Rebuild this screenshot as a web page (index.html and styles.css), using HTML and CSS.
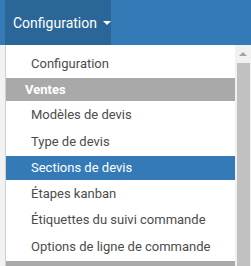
FILE: index.html
```html
<!DOCTYPE html>
<html lang="fr">
<head>
    <meta charset="UTF-8">
    <meta name="viewport" content="width=device-width, initial-scale=1.0">
    <title>Configuration</title>
    <link rel="stylesheet" href="styles.css">
</head>
<body>
    <header class="navbar">
        <div class="nav-item active">
            Configuration <span class="caret"></span>
        </div>
    </header>

    <div class="page">
        <div class="gutter"></div>
        <div class="dropdown">
            <ul class="menu">
                <li class="menu-item">Configuration</li>
                <li class="menu-header">Ventes</li>
                <li class="menu-item">Modèles de devis</li>
                <li class="menu-item">Type de devis</li>
                <li class="menu-item selected">Sections de devis</li>
                <li class="menu-item">Étapes kanban</li>
                <li class="menu-item">Étiquettes du suivi commande</li>
                <li class="menu-item">Options de ligne de commande</li>
                <li class="menu-header"></li>
            </ul>
            <div class="scrollbar">
                <div class="scroll-arrow"></div>
                <div class="scroll-thumb"></div>
            </div>
        </div>
    </div>
</body>
</html>
```

FILE: styles.css
```css
body {
    margin: 0;
    padding: 0;
    height: 266px;
    overflow: hidden;
    font-family: Roboto, "Liberation Sans", sans-serif;
    background-color: #f2f2f2;
}

.navbar {
    height: 45px;
    background-color: #337ab7;
    padding-left: 5px;
    display: flex;
}

.nav-item {
    display: flex;
    align-items: center;
    padding: 0 7px 0 8px;
    width: 91px;
    color: white;
    font-size: 14px;
}

.nav-item.active {
    background-color: #2b6698;
}

.caret {
    display: inline-block;
    margin-left: 6px;
    margin-top: 1px;
    border-top: 4px solid white;
    border-left: 4px solid transparent;
    border-right: 4px solid transparent;
}

.page {
    display: flex;
    height: 221px;
    overflow: hidden;
}

.gutter {
    width: 5px;
    background-color: #f2f2f2;
    border-right: 1px solid #cfcfcf;
}

.dropdown {
    flex: 1;
    display: flex;
    background-color: white;
}

.menu {
    flex: 1;
    display: flex;
    flex-direction: column;
    gap: 2.3px;
    list-style: none;
    margin: 0;
    padding: 6.7px 0 0 0;
    font-size: 13px;
}

.menu-item {
    flex-shrink: 0;
    height: 24px;
    line-height: 24px;
    padding-left: 25px;
    color: #4c4c4c;
    white-space: nowrap;
}

.menu-item.selected {
    background-color: #337ab7;
    color: white;
}

.menu-header {
    flex-shrink: 0;
    height: 23px;
    line-height: 23px;
    padding-left: 19px;
    background-color: #a9a9a9;
    color: white;
    font-weight: bold;
}

.scrollbar {
    width: 16px;
    background-color: #f1f1f1;
    display: flex;
    flex-direction: column;
}

.scroll-arrow {
    height: 18px;
    display: flex;
    justify-content: center;
    align-items: center;
}

.scroll-arrow::before {
    content: "";
    border-bottom: 4px solid #a3a3a3;
    border-left: 4px solid transparent;
    border-right: 4px solid transparent;
}

.scroll-thumb {
    flex: 1;
    margin: 0 1px 0 2px;
    background-color: #c1c1c1;
}
```
